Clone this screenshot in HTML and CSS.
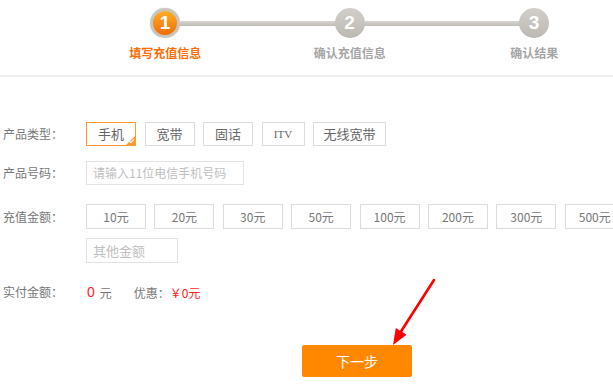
FILE: index.html
```html
<!DOCTYPE html>
<html lang="zh-CN">

<head>
    <meta charset="UTF-8">
    <meta name="viewport" content="width=device-width, initial-scale=1.0">
    <title>充值</title>
    <link rel="stylesheet" href="styles.css">
</head>

<body>

    <div class="page">
        <div class="steps">
            <div class="track">
                <span class="dot dotActive">1</span>
                <span class="bar"></span>
                <span class="dot">2</span>
                <span class="bar"></span>
                <span class="dot">3</span>
            </div>
            <div class="stepLabels">
                <span class="stepActive">填写充值信息</span>
                <span>确认充值信息</span>
                <span>确认结果</span>
            </div>
        </div>

        <div class="form">
            <div class="row rowType">
                <div class="label">产品类型：</div>
                <div class="options">
                    <span class="option optionPicked">手机</span>
                    <span class="option">宽带</span>
                    <span class="option">固话</span>
                    <span class="option optionItv">ITV</span>
                    <span class="option optionWide">无线宽带</span>
                </div>
            </div>

            <div class="row rowNumber">
                <div class="label">产品号码：</div>
                <div class="input inputPhone">请输入11位电信手机号码</div>
            </div>

            <div class="row rowAmount">
                <div class="label labelTall">充值金额：</div>
                <div class="amountBox">
                    <div class="amounts">
                        <span class="amount">10元</span>
                        <span class="amount">20元</span>
                        <span class="amount">30元</span>
                        <span class="amount">50元</span>
                        <span class="amount">100元</span>
                        <span class="amount">200元</span>
                        <span class="amount">300元</span>
                        <span class="amount">500元</span>
                    </div>
                    <div class="input inputOther">其他金额</div>
                </div>
            </div>

            <div class="row rowTotal">
                <div class="label labelTotal">实付金额：</div>
                <div class="total">
                    <span class="money">0</span>
                    <span class="unit">元</span>
                    <span class="discount">优惠：<em>￥0元</em></span>
                </div>
            </div>

            <button class="nextButton">下一步</button>
        </div>

        <svg class="arrow" width="613" height="388" viewBox="0 0 613 388">
            <line x1="434" y1="280" x2="400" y2="333" stroke="#f00" stroke-width="2.6" stroke-linecap="round" />
            <polygon points="393,345 406.5,334.8 395.8,328" fill="#f00" />
        </svg>
    </div>

</body>

</html>
```

FILE: styles.css
```css
body {
    margin: 0;
    background: #fff;
    font-family: "Noto Sans CJK SC", "Liberation Sans", sans-serif;
    font-size: 12px;
    color: #777;
}

.page {
    position: relative;
    width: 613px;
    height: 388px;
    overflow: hidden;
}

/* steps */

.steps {
    height: 75px;
    border-bottom: 2px solid #eeeeee;
}

.track {
    display: flex;
    align-items: center;
    width: 399px;
    margin-left: 150px;
    padding-top: 8px;
}

.dot {
    box-sizing: border-box;
    width: 30px;
    height: 30px;
    border-radius: 50%;
    background: linear-gradient(#d2cfca, #bcb9b3);
    color: #fff;
    font-family: "Liberation Sans", Arial, sans-serif;
    font-weight: bold;
    font-size: 19px;
    line-height: 30px;
    text-align: center;
    flex: none;
}

.dotActive {
    border: 3px solid #c8c5bf;
    background: linear-gradient(#ffae2a, #f06c00);
    line-height: 24px;
    box-shadow: 0 0 1px #aaa;
}

.bar {
    flex: 1;
    height: 5px;
    margin: 0 -1px;
    background: linear-gradient(#d9d7d3, #bebbb5);
}

.stepLabels {
    display: grid;
    grid-template-columns: 184.5px 184.5px 184.5px;
    margin-left: 73px;
    margin-top: 7px;
    font-weight: bold;
    font-size: 12px;
    line-height: 16px;
    color: #a5a5a5;
    text-align: center;
}

.stepActive {
    color: #ff6c00;
}

/* form */

.form {
    padding-top: 45px;
}

.row {
    display: flex;
    align-items: flex-start;
}

.label {
    width: 83px;
    padding-left: 3px;
    line-height: 24px;
    color: #777;
    flex: none;
}

.options {
    display: flex;
    gap: 8.5px;
}

.option {
    position: relative;
    box-sizing: border-box;
    width: 50px;
    height: 24px;
    border: 1px solid #dcdcdc;
    color: #666;
    line-height: 22px;
    text-align: center;
    font-size: 13px;
}

.optionPicked {
    border-color: #ff9a2e;
}

.optionPicked::after {
    content: "";
    position: absolute;
    right: -1px;
    bottom: -1px;
    border-style: solid;
    border-width: 0 0 11px 11px;
    border-color: transparent transparent #ff9a2e transparent;
}

.optionPicked::before {
    content: "";
    position: absolute;
    right: 1px;
    bottom: 3px;
    width: 4px;
    height: 2px;
    border-left: 1px solid #fff;
    border-bottom: 1px solid #fff;
    transform: rotate(-45deg);
    z-index: 1;
}

.optionItv {
    width: 43px;
    font-family: "Liberation Serif", serif;
    font-size: 11px;
}

.optionWide {
    width: 73px;
}

.input {
    box-sizing: border-box;
    height: 24px;
    border: 1px solid #e3e3e3;
    color: #c0c0c0;
    line-height: 22px;
    padding-left: 6px;
    font-size: 12px;
}

.rowNumber {
    margin-top: 15px;
}

.inputPhone {
    width: 158px;
}

.rowAmount {
    margin-top: 19px;
}

.labelTall {
    line-height: 25px;
}

.amountBox {
    display: flex;
    flex-direction: column;
    gap: 9px;
}

.amounts {
    display: flex;
    gap: 8.4px;
}

.amount {
    box-sizing: border-box;
    width: 60px;
    height: 25px;
    border: 1px solid #dcdcdc;
    color: #777;
    line-height: 23px;
    text-align: center;
    flex: none;
}

.inputOther {
    width: 92px;
    height: 25px;
    line-height: 23px;
    font-size: 13px;
}

.rowTotal {
    margin-top: 19px;
}

.labelTotal {
    line-height: 20px;
}

.total {
    display: flex;
    align-items: center;
    height: 20px;
    padding-left: 1px;
}

.money {
    color: #f22;
    font-family: "Liberation Sans", Arial, sans-serif;
    font-size: 14px;
}

.unit {
    margin-left: 5px;
    color: #777;
    font-size: 12px;
}

.discount {
    margin-left: 22px;
    color: #777;
}

.discount em {
    font-style: normal;
    color: #f22;
}

.nextButton {
    display: block;
    width: 110px;
    height: 32px;
    margin: 43px 0 0 302px;
    border: 0;
    border-radius: 2px;
    background: #ff8800;
    color: #fff;
    font-family: "Noto Sans CJK SC", sans-serif;
    font-size: 14px;
}

.arrow {
    position: absolute;
    left: 0;
    top: 0;
}
```
